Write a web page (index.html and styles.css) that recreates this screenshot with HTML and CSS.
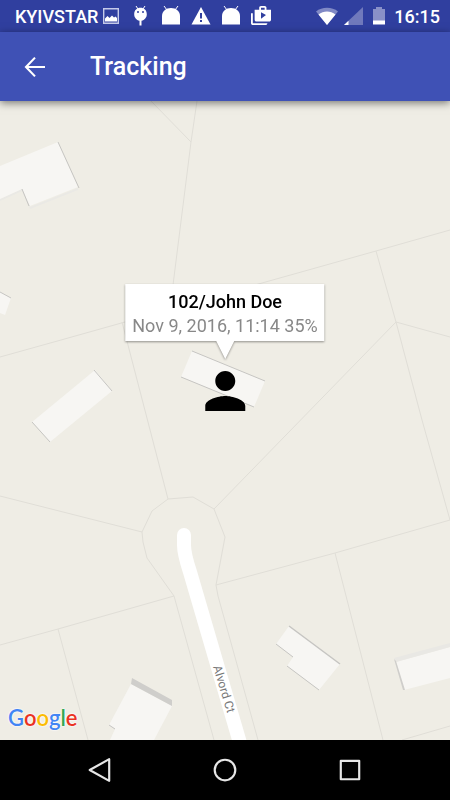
FILE: index.html
```html
<!DOCTYPE html>
<html lang="en">
<head>
    <meta charset="UTF-8">
    <meta name="viewport" content="width=device-width, initial-scale=1">
    <title>Tracking</title>
    <link rel="stylesheet" href="styles.css">
</head>
<body>
    <div class="status-bar">
        <span class="carrier">KYIVSTAR</span>
        <div class="notifications">
            <svg class="icon" viewBox="0 0 20 20"><path fill="none" stroke="#c5cae9" stroke-width="1.4" d="M2.700 2.700h14.600v14.600H2.700z"/><path fill="#fff" d="M4 15.500v-3l2.500-2.500 2 2 2.500-2.500 2 2 1.500-1 1.500 1.500v3.500z"/></svg>
            <svg class="icon" viewBox="0 0 20 20"><path fill="none" stroke="#fff" stroke-width="1" d="M5 0l2 3M14 0l-2 3"/><path fill="#fff" d="M3.200 8.500C3.200 4 6 1.800 9.500 1.800s6.300 2.200 6.300 6.700c0 3-2.300 5.500-5.300 6.300v4.700h-2v-4.700c-3-.8-5.300-3.300-5.300-6.300z"/><circle cx="7" cy="6" r="1" fill="#303f9f"/><circle cx="12" cy="6" r="1" fill="#303f9f"/></svg>
            <svg class="icon" viewBox="0 0 20 20"><path fill="none" stroke="#fff" stroke-width="1" d="M3 0l3 4M17 0l-3 4"/><path fill="#fff" d="M1 18.500V10c0-4.500 4-8 9-8s9 3.500 9 8v8.500z"/></svg>
            <svg class="icon" viewBox="0 0 20 20"><path fill="#fff" d="M10 1l9.500 17.500H.5z"/><path fill="#303f9f" d="M9 7h2v5.500H9zM9 14h2v2H9z"/></svg>
            <svg class="icon" viewBox="0 0 20 20"><path fill="none" stroke="#fff" stroke-width="1" d="M3 0l3 4M17 0l-3 4"/><path fill="#fff" d="M1 18.500V10c0-4.500 4-8 9-8s9 3.500 9 8v8.500z"/></svg>
            <svg class="icon" viewBox="1 1 22 22"><path fill="#fff" d="M3 9H1v11c0 1.110.89 2 2 2h14c1.110 0 2-.89 2-2H3V9zm15-4V3c0-1.110-.89-2-2-2h-4c-1.110 0-2 .89-2 2v2H5v11c0 1.110.89 2 2 2h14c1.110 0 2-.89 2-2V5h-5zm-6-2h4v2h-4V3zm0 12V8l5.500 3-5.500 4z"/></svg>
        </div>
        <div class="system">
            <svg class="icon wifi" viewBox="0 0 24 20"><path fill="#8089c5" d="M12 19L1 5.500C7 .5 17 .5 23 5.500z"/><path fill="#fff" d="M12 19L3.500 8.500c5-4 12-4 17 0z"/></svg>
            <svg class="icon" viewBox="0 0 20 20"><path fill="#7079bc" d="M0 19L19 1v18z"/><path fill="#fff" d="M0 19l4.500-4.300V19z"/></svg>
            <svg class="icon" viewBox="0 0 20 20"><path fill="#8990c8" d="M4 3h3V1h6v2h3v12H4z"/><path fill="#fff" d="M4 14.500h12v4H4z"/></svg>
        </div>
        <span class="clock">16:15</span>
    </div>

    <header class="toolbar">
        <button class="back" type="button" aria-label="Back">
            <svg viewBox="0 0 24 24"><path fill="none" stroke="#fff" stroke-width="1.700" d="M20 12H5M12 4.500L4.800 12l7.200 7.500"/></svg>
        </button>
        <h1>Tracking</h1>
    </header>

    <main class="map">
        <svg class="tiles" viewBox="0 101 450 639" preserveAspectRatio="xMidYMid slice">
            <!-- parcel borders -->
            <g class="parcels">
                <path d="M151 101L191 142M197 101L191 142L173 285"/>
                <path d="M0 357L61 340L125 322L262 283L376 251L450 230"/>
                <path d="M122 322L168 499M376 251L396 322L422 420L450 520M450 337L396 322L214 509"/>
                <path d="M0 496L142 532L152 511L168 499L193 497L214 509L225 537L216 585L218 596L258 740"/>
                <path d="M142 532L143 542L147 558L174 596L214 740M0 645L58 629L174 596M58 629L88 740"/>
                <path d="M216 585L335 553L450 520M335 553L383 740M402 740L450 726"/>
            </g>
            <!-- buildings -->
            <path fill="#eae9e5" d="M0 199L22 189L30 207L78 188V190L30 209L22 191L0 201z"/>
            <g class="buildings">
                <path d="M0 166L58 142L78 187L30 206L22 189L0 199z"/>
                <path d="M0 292L11 298L5 315L0 313z"/>
                <path d="M95 370L112 391L50 442L32 422z"/>
                <path d="M192 351L265 381L254 407L181 377z"/>
                <path d="M289 626L340 664L319 690L287 666L293 657L276 644z"/>
                <path d="M396 662L450 647V678L404 690z"/>
                <path d="M131 684L172 706L154 740H110L115 729L109 725z"/>
            </g>
            <path fill="#e9e8e4" d="M394 658L450 643V647L396 662z"/>
            <path fill="#cfcecb" d="M132 678L172 700V706L131 684zM394 659L396 661L405 690L403 690z"/>
            <g class="edges">
                <path d="M58 142L79 188M22 189L29 206M0 292L11 298M94 370L112 391M32 422L50 442"/>
                <path d="M192 351L265 381M181 377L254 407M276 644L293 657M287 666L319 690M109 725L115 729"/>
                <path stroke-width="1.5" d="M289 626L340 664"/>
            </g>
            <path class="road" d="M184 535V545C184 553 187 563 190 572L240 743"/>
            <text class="road-name" transform="translate(224 689) rotate(73)" text-anchor="middle" y="4">Alvord Ct</text>
        </svg>

        <div class="marker">
            <div class="info-window">
                <strong>102/John Doe</strong>
                <span>Nov 9, 2016, 11:14 35%</span>
            </div>
            <svg class="person" viewBox="0 0 24 24"><path d="M12 12c2.210 0 4-1.790 4-4s-1.790-4-4-4-4 1.790-4 4 1.790 4 4 4zm0 2c-2.670 0-8 1.340-8 4v2h16v-2c0-2.660-5.330-4-8-4z"/></svg>
        </div>

        <div class="google"><span class="blue">G</span><span class="red">o</span><span class="yellow">o</span><span class="blue">g</span><span class="green">l</span><span class="red">e</span></div>
    </main>

    <nav class="nav-bar">
        <button type="button" aria-label="Back"><svg viewBox="0 0 24 24"><path d="M20.500 2v20L2.500 12z"/></svg></button>
        <button type="button" aria-label="Home"><svg viewBox="0 0 24 24"><circle cx="12" cy="12" r="9.500"/></svg></button>
        <button type="button" aria-label="Recent apps"><svg viewBox="0 0 24 24"><path d="M3.500 3.500h17v17h-17z"/></svg></button>
    </nav>
</body>
</html>
```

FILE: styles.css
```css
* {
    box-sizing: border-box;
}
body {
    margin: 0;
    min-height: 100vh;
    display: flex;
    flex-direction: column;
    font-family: Roboto, sans-serif;
    background-color: #efede5;
}
button {
    display: flex;
    align-items: center;
    justify-content: center;
    padding: 0;
    border: none;
    background: none;
    cursor: pointer;
}

/* Status bar */
.status-bar {
    display: flex;
    align-items: center;
    height: 32px;
    padding: 0 10px 0 15px;
    background-color: #303f9f;
    color: #fff;
    font-size: 18px;
    font-weight: 500;
}
.notifications {
    display: flex;
    gap: 10px;
    margin-left: 3px;
}
.system {
    display: flex;
    gap: 5px;
    margin-left: auto;
    margin-right: 5px;
}
.icon {
    display: block;
    width: 20px;
    height: 20px;
}
.wifi {
    width: 24px;
}

/* Toolbar */
.toolbar {
    display: flex;
    align-items: center;
    gap: 40px;
    height: 69px;
    padding-left: 20px;
    background-color: #3f51b5;
    color: #fff;
    box-shadow: 0 2px 8px rgba(0, 0, 0, 0.5);
    z-index: 1;
}
.back svg {
    width: 30px;
    height: 30px;
}
.toolbar h1 {
    margin: 0;
    font-size: 25px;
    font-weight: 500;
}

/* Map */
.map {
    position: relative;
    flex: 1;
    overflow: hidden;
    background-color: #efede5;
}
.tiles {
    position: absolute;
    width: 100%;
    height: 100%;
}
.parcels {
    fill: none;
    stroke: #e0ded7;
    stroke-width: 1;
}
.buildings {
    fill: #f7f6f3;
}
.edges {
    fill: none;
    stroke: #c6c5c2;
    stroke-width: 1;
}
.road {
    fill: none;
    stroke: #fff;
    stroke-width: 14;
    stroke-linecap: round;
    stroke-linejoin: round;
}
.road-name {
    fill: #777;
    font-size: 12px;
}
.marker {
    position: absolute;
    left: 50%;
    bottom: 50%;
    transform: translateX(-50%);
    display: flex;
    flex-direction: column;
    align-items: center;
    gap: 20px;
}
.info-window {
    position: relative;
    display: flex;
    flex-direction: column;
    align-items: center;
    padding: 6px 7px 3px;
    background-color: #fff;
    font-size: 18px;
    line-height: 24px;
    color: #888;
    white-space: nowrap;
    filter: drop-shadow(0 1px 1px rgba(0, 0, 0, 0.4));
}
.info-window strong {
    font-weight: 500;
    color: #000;
}
.info-window::after {
    content: "";
    position: absolute;
    top: 100%;
    left: 50%;
    margin-left: -9px;
    border: 9px solid transparent;
    border-top: 18px solid #fff;
    border-bottom: none;
}
.person {
    display: block;
    width: 60px;
    height: 60px;
}
.google {
    position: absolute;
    left: 8px;
    bottom: 8px;
    font-family: Lato, sans-serif;
    font-size: 22px;
    font-weight: 600;
    line-height: 28px;
    text-shadow: 0 0 2px #fff, 0 0 2px #fff;
}
.blue {
    color: #4285f4;
}
.red {
    color: #ea3323;
}
.yellow {
    color: #fbbc05;
}
.green {
    color: #34a853;
}

/* Navigation buttons */
.nav-bar {
    display: flex;
    justify-content: center;
    gap: 65px;
    height: 60px;
    background-color: #000;
}
.nav-bar button {
    width: 60px;
}
.nav-bar svg {
    width: 26px;
    height: 26px;
    fill: none;
    stroke: #e6e6e6;
    stroke-width: 2;
    stroke-linejoin: round;
}
```
